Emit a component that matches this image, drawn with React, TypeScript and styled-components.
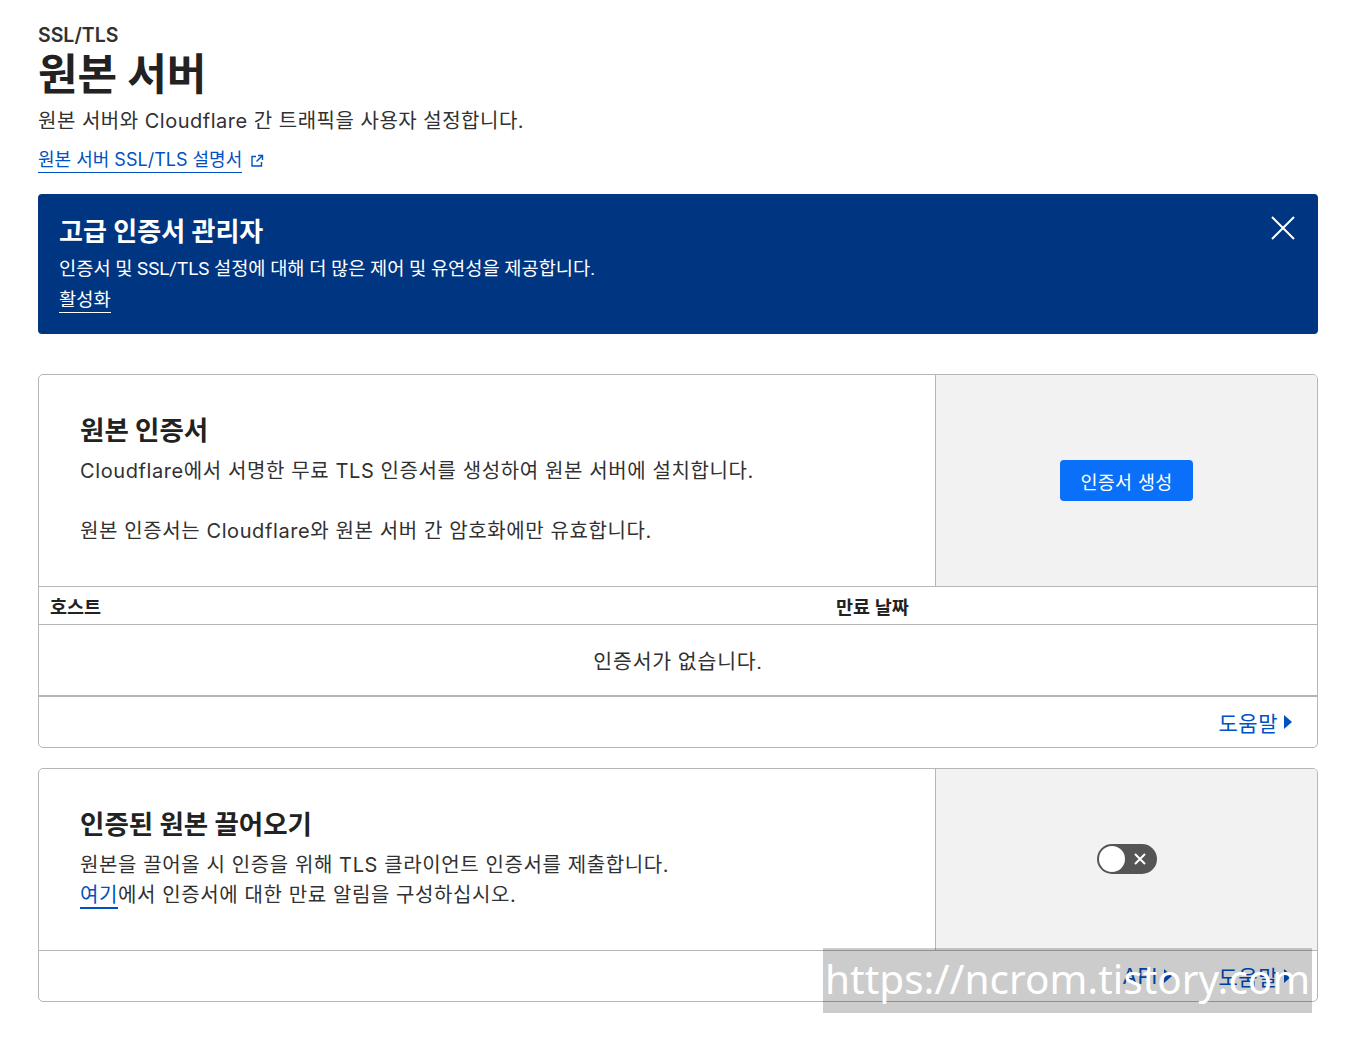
import React from "react";
import styled, { createGlobalStyle } from "styled-components";

const GlobalStyle = createGlobalStyle`
  html, body {
    margin: 0;
    padding: 0;
    background: #ffffff;
    font-family: "Inter", "Noto Sans CJK KR", sans-serif;
    color: #313131;
  }
`;

const Page = styled.div`
  position: relative;
  padding: 23px 34px 40px 38px;
  width: 1280px;
`;

const Header = styled.header`
  display: flex;
  flex-direction: column;
  align-items: flex-start;
`;

const Eyebrow = styled.div`
  font-size: 19.5px;
  font-weight: 600;
  color: #313131;
  line-height: 24px;
`;

const PageTitle = styled.h1`
  margin: 0;
  font-size: 43px;
  font-weight: 700;
  color: #222;
  line-height: 54px;
`;

const Lead = styled.p`
  margin: 5px 0 0;
  font-size: 20px;
  letter-spacing: 0.5px;
  line-height: 30px;
  color: #313131;
`;

const DocLink = styled.a`
  margin-top: 12px;
  display: inline-flex;
  align-items: center;
  gap: 8px;
  font-size: 18px;
  color: #0051c3;
  text-decoration: none;
  line-height: 24px;
  span {
    border-bottom: 1.5px solid #0051c3;
  }
`;

const Banner = styled.section`
  position: relative;
  margin-top: 21px;
  background: #003681;
  border-radius: 4px;
  padding: 18px 21px 21px;
  color: #fff;
  font-family: "Roboto", "Noto Sans CJK KR", sans-serif;
`;

const BannerTitle = styled.h2`
  margin: 0;
  font-size: 26px;
  font-weight: 700;
  line-height: 40px;
`;

const BannerText = styled.p`
  margin: 2px 0 0;
  font-size: 18.7px;
  line-height: 30px;
`;

const BannerAction = styled.a`
  display: inline-block;
  margin-top: 4px;
  font-size: 18.7px;
  line-height: 24px;
  color: #fff;
  text-decoration: none;
  border-bottom: 1.5px solid #fff;
`;

const CloseButton = styled.button`
  position: absolute;
  top: 21px;
  right: 22px;
  padding: 0;
  border: 0;
  background: none;
  cursor: pointer;
  line-height: 0;
`;

const Card = styled.section<{ $first?: boolean }>`
  margin-top: ${(p) => (p.$first ? "40px" : "20px")};
  border: 1px solid #b6b6b6;
  border-radius: 5px;
  overflow: hidden;
`;

const CardTop = styled.div<{ $h: number }>`
  display: grid;
  grid-template-columns: 896px 1fr;
  min-height: ${(p) => p.$h}px;
`;

const CardBody = styled.div`
  padding: 37px 41px 20px;
`;

const CardTitle = styled.h3`
  margin: 0;
  font-size: 26.5px;
  font-weight: 700;
  line-height: 36px;
  color: #222;
`;

const CardText = styled.p<{ $gap?: number }>`
  margin: ${(p) => p.$gap ?? 8}px 0 0;
  font-size: 20px;
  letter-spacing: 0.6px;
  line-height: 30px;
  color: #313131;
`;

const Underlined = styled.a`
  color: #0051c3;
  text-decoration: none;
  border-bottom: 2px solid #0051c3;
`;

const CardSide = styled.div<{ $top: number }>`
  background: #f2f2f2;
  border-left: 1px solid #b6b6b6;
  display: flex;
  justify-content: center;
  align-items: flex-start;
  padding-top: ${(p) => p.$top}px;
`;

const PrimaryButton = styled.button`
  background: #0a6ff9;
  color: #fff;
  border: 0;
  border-radius: 4px;
  height: 41px;
  padding: 0 20px;
  font-family: "Inter", "Noto Sans CJK KR", sans-serif;
  font-size: 18.5px;
  letter-spacing: 0.3px;
  cursor: pointer;
`;

const TableHead = styled.div`
  display: grid;
  grid-template-columns: 786px 1fr;
  border-top: 1px solid #b6b6b6;
  border-bottom: 1px solid #b6b6b6;
  height: 37px;
  align-items: center;
  padding: 0 11px;
  font-size: 18.5px;
  font-weight: 700;
  color: #222;
  font-family: "Roboto", "Noto Sans CJK KR", sans-serif;
`;

const EmptyRow = styled.div`
  height: 70px;
  display: flex;
  align-items: center;
  justify-content: center;
  font-size: 20.5px;
  letter-spacing: 0.8px;
  color: #313131;
  border-bottom: 2px solid #b6b6b6;
  font-family: "Roboto", "Noto Sans CJK KR", sans-serif;
`;

const CardFooter = styled.div<{ $border?: boolean }>`
  height: 50px;
  display: flex;
  align-items: center;
  justify-content: flex-end;
  gap: 46px;
  padding-right: 24px;
  border-top: ${(p) => (p.$border ? "1px solid #b6b6b6" : "none")};
`;

const FooterLink = styled.a`
  display: inline-flex;
  align-items: center;
  gap: 5px;
  font-size: 21px;
  letter-spacing: 0.5px;
  color: #0051c3;
  text-decoration: none;
`;

const Toggle = styled.div`
  width: 60px;
  height: 30px;
  border-radius: 15px;
  background: #555;
  display: flex;
  align-items: center;
  padding: 0 2px;
  box-sizing: border-box;
  gap: 8px;
`;

const Knob = styled.div`
  width: 26px;
  height: 26px;
  border-radius: 50%;
  background: #fff;
`;

const Watermark = styled.div`
  position: absolute;
  left: 823px;
  top: 948px;
  width: 489px;
  height: 65px;
  background: rgba(0, 0, 0, 0.2);
  color: #fff;
  font-family: "Noto Sans", "DejaVu Sans", sans-serif;
  font-size: 40.5px;
  line-height: 62px;
  white-space: nowrap;
  overflow: hidden;
  padding-left: 2px;
  box-sizing: border-box;
`;

const Caret = () => (
  <svg width="10" height="16" viewBox="0 0 10 16">
    <path d="M1 1 L9 8 L1 15 Z" fill="#0051c3" />
  </svg>
);

export default function App() {
  return (
    <>
      <GlobalStyle />
      <Page>
        <Header>
          <Eyebrow>SSL/TLS</Eyebrow>
          <PageTitle>원본 서버</PageTitle>
          <Lead>원본 서버와 Cloudflare 간 트래픽을 사용자 설정합니다.</Lead>
          <DocLink href="#">
            <span>원본 서버 SSL/TLS 설명서</span>
            <svg width="14" height="14" viewBox="0 0 14 14" fill="none" stroke="#0051c3" strokeWidth="1.4">
              <path d="M6 2.5H2v9.5h9.5V8" />
              <path d="M8 1.5h4.5V6" />
              <path d="M12.5 1.5L6.5 7.5" />
            </svg>
          </DocLink>
        </Header>

        <Banner>
          <BannerTitle>고급 인증서 관리자</BannerTitle>
          <BannerText>인증서 및 SSL/TLS 설정에 대해 더 많은 제어 및 유연성을 제공합니다.</BannerText>
          <BannerAction href="#">활성화</BannerAction>
          <CloseButton aria-label="닫기">
            <svg width="26" height="26" viewBox="0 0 26 26" stroke="#fff" strokeWidth="2">
              <path d="M2 2L24 24M24 2L2 24" />
            </svg>
          </CloseButton>
        </Banner>

        <Card $first>
          <CardTop $h={211}>
            <CardBody>
              <CardTitle>원본 인증서</CardTitle>
              <CardText>Cloudflare에서 서명한 무료 TLS 인증서를 생성하여 원본 서버에 설치합니다.</CardText>
              <CardText $gap={30}>원본 인증서는 Cloudflare와 원본 서버 간 암호화에만 유효합니다.</CardText>
            </CardBody>
            <CardSide $top={85}>
              <PrimaryButton>인증서 생성</PrimaryButton>
            </CardSide>
          </CardTop>
          <TableHead>
            <span>호스트</span>
            <span>만료 날짜</span>
          </TableHead>
          <EmptyRow>인증서가 없습니다.</EmptyRow>
          <CardFooter>
            <FooterLink href="#">
              도움말 <Caret />
            </FooterLink>
          </CardFooter>
        </Card>

        <Card>
          <CardTop $h={181}>
            <CardBody>
              <CardTitle>인증된 원본 끌어오기</CardTitle>
              <CardText>원본을 끌어올 시 인증을 위해 TLS 클라이언트 인증서를 제출합니다.</CardText>
              <CardText $gap={0}>
                <Underlined href="#">여기</Underlined>에서 인증서에 대한 만료 알림을 구성하십시오.
              </CardText>
            </CardBody>
            <CardSide $top={75}>
              <Toggle>
                <Knob />
                <svg width="14" height="14" viewBox="0 0 14 14" stroke="#fff" strokeWidth="2">
                  <path d="M2 2L12 12M12 2L2 12" />
                </svg>
              </Toggle>
            </CardSide>
          </CardTop>
          <CardFooter $border>
            <FooterLink href="#">
              API <Caret />
            </FooterLink>
            <FooterLink href="#">
              도움말 <Caret />
            </FooterLink>
          </CardFooter>
        </Card>
        <Watermark>https://ncrom.tistory.com</Watermark>
      </Page>
    </>
  );
}
